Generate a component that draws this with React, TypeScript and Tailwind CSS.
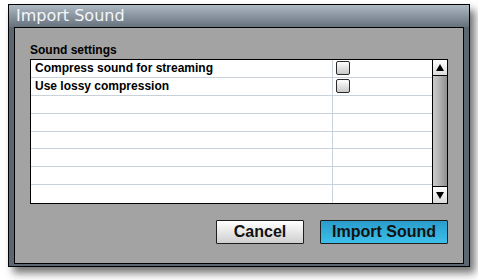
import React from 'react';

const rows = [
  { label: 'Compress sound for streaming', check: true },
  { label: 'Use lossy compression', check: true },
  { label: '', check: false },
  { label: '', check: false },
  { label: '', check: false },
  { label: '', check: false },
  { label: '', check: false },
  { label: '', check: false },
];

const Checkbox: React.FC = () => (
  <div className="w-[14px] h-[14px] rounded-[2px] border border-[#2a2a2a] bg-gradient-to-b from-[#ffffff] to-[#c9c9c9]" />
);

const App: React.FC = () => {
  return (
    <div className="w-[478px] h-[280px] bg-white pl-[8px] pt-[4px] font-['Liberation_Sans',Arial,sans-serif] text-black">
      <div className="w-[462px] h-[263px] border border-black bg-[#5c6672] flex flex-col shadow-[5px_6px_8px_rgba(0,0,0,0.55)]">
        {/* title bar */}
        <div className="h-[22px] shrink-0 bg-gradient-to-b from-[#aeb9c4] to-[#67727e] pl-[7px] text-[16px] leading-[22px] text-[#f4f6f8] font-['DejaVu_Sans',sans-serif]">
          Import Sound
        </div>

        <div className="mx-[5px] h-[237px] border border-black bg-[#a3a3a3] px-[15px] pt-[15px] flex flex-col">
          <div className="text-[12px] leading-[14px] font-bold">Sound settings</div>

          <div className="mt-[2px] w-[418px] h-[145px] border border-black bg-white flex">
            <div className="flex flex-col">
              {rows.map((r, i) => (
                <div
                  key={i}
                  className={`flex h-[18px] ${i < rows.length - 1 ? 'border-b border-[#c9d2db]' : 'h-[17px]'}`}
                >
                  <div className="w-[302px] border-r border-[#c9d2db] pl-[4px] text-[12px] leading-[17px] font-bold">
                    {r.label}
                  </div>
                  <div className="w-[99px] pl-[3px] pt-[1px]">{r.check && <Checkbox />}</div>
                </div>
              ))}
            </div>

            {/* scrollbar */}
            <div className="w-[15px] border-l border-black flex flex-col">
              <div className="h-[16px] border-b border-black bg-gradient-to-b from-[#ffffff] to-[#dcdcdc] flex items-center justify-center">
                <svg width="8" height="7" viewBox="0 0 8 7">
                  <path d="M4 0 L8 7 L0 7 Z" fill="#000" />
                </svg>
              </div>
              <div className="flex-1 bg-gradient-to-r from-[#cbcbcb] via-[#b0b0b0] to-[#8f8f8f]" />
              <div className="h-[17px] border-t border-black bg-gradient-to-b from-[#ffffff] to-[#dcdcdc] flex items-center justify-center">
                <svg width="8" height="7" viewBox="0 0 8 7">
                  <path d="M0 0 L8 0 L4 7 Z" fill="#000" />
                </svg>
              </div>
            </div>
          </div>

          <div className="mt-[16px] flex justify-end gap-[16px] w-[418px]">
            <button className="w-[88px] h-[24px] border border-[#1e1e1e] rounded-[1px] bg-gradient-to-b from-[#ffffff] to-[#cfcfcf] text-[16px] leading-[20px] font-bold text-[#111]">
              Cancel
            </button>
            <button className="w-[128px] h-[24px] border border-[#1e1e1e] rounded-[1px] bg-gradient-to-b from-[#2a9ccb] to-[#3cbfeb] text-[16px] leading-[20px] font-bold text-[#111]">
              Import Sound
            </button>
          </div>
        </div>
      </div>
    </div>
  );
};

export default App;
